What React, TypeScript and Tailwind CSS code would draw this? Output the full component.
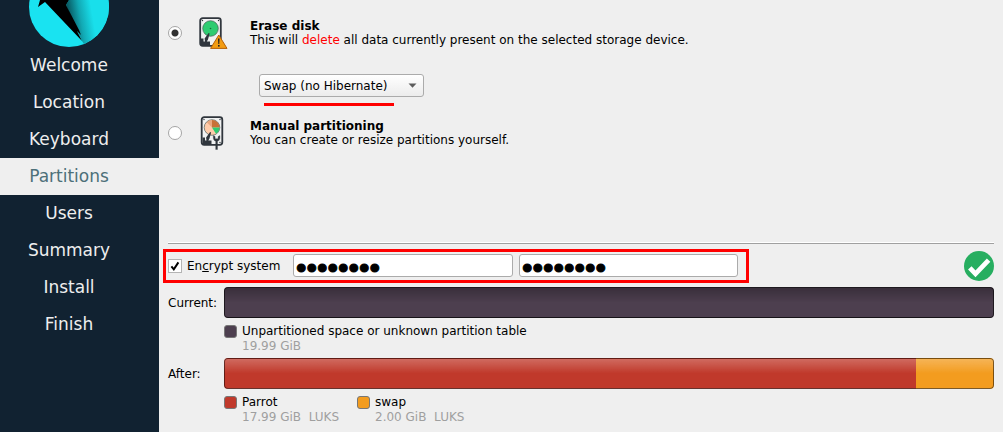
import { useState } from "react";

const steps = ["Welcome", "Location", "Keyboard", "Partitions", "Users", "Summary", "Install", "Finish"];

type Segment = { name: string; detail: string; share: number; fill: string };

const current: Segment[] = [
  { name: "Unpartitioned space or unknown partition table", detail: "19.99 GiB", share: 1, fill: "bg-[#4d3f4f]" },
];

const after: Segment[] = [
  { name: "Parrot", detail: "17.99 GiB\u00a0 LUKS", share: 0.899, fill: "bg-[#c0392b]" },
  { name: "swap", detail: "2.00 GiB\u00a0 LUKS", share: 0.101, fill: "bg-[#f39c1f]" },
];

function Logo() {
  return (
    <svg className="h-[47px] w-20" viewBox="0 0 80 47" aria-hidden="true">
      <defs>
        <linearGradient id="wing" gradientUnits="userSpaceOnUse" x1="38" y1="10" x2="62" y2="6">
          <stop offset="0" stopColor="#07525a" />
          <stop offset="0.5" stopColor="#12a9b4" />
          <stop offset="1" stopColor="#19dfeb" />
        </linearGradient>
        <clipPath id="disc">
          <circle cx="40" cy="7" r="40" />
        </clipPath>
      </defs>
      <g clipPath="url(#disc)">
        <rect width="80" height="47" fill="#19e3f1" />
        <path d="M40 0H80V47H57L53 41L37 5Z" fill="url(#wing)" />
        <path d="M11 0L9 7L16 2L53 41L48 31L52 35L50 30L37 5L40 0Z" fill="#000" />
      </g>
    </svg>
  );
}

function Disk({ platter }: { platter: string }) {
  return (
    <>
      <rect x="4.2" y="1.2" width="20.6" height="27.6" rx="2.5" fill="#f1f2f2" stroke="#30363d" strokeWidth="1.8" />
      <circle cx="14.5" cy="11.5" r="7.8" fill={platter} stroke="#4b5b58" strokeWidth="0.7" />
      <g fill="#30363d">
        <circle cx="6.5" cy="3.5" r="0.7" />
        <circle cx="22.5" cy="3.5" r="0.7" />
        <circle cx="22.5" cy="26.5" r="0.7" />
      </g>
    </>
  );
}

function Arm() {
  return <path d="M5 21.5H7.5V24.5H9L8.6 21.5L12.6 16L13.6 16.6L12 22.5L10.8 24.5H14V28H5Z" fill="#30363d" />;
}

function EraseIcon() {
  return (
    <svg className="size-8" viewBox="0 0 32 32" aria-hidden="true">
      <Disk platter="#2ecc71" />
      <circle cx="14.5" cy="11.5" r="0.8" fill="#176b3a" />
      <Arm />
      <path d="M22.8 18L31 31.4H14.6Z" fill="#f39c12" stroke="#b45f06" strokeWidth="1" strokeLinejoin="round" />
      <path d="M22 21.5h1.6l-.3 5.5h-1z" fill="#222" />
      <rect x="22" y="28" width="1.6" height="1.6" fill="#222" />
    </svg>
  );
}

function ManualIcon() {
  return (
    <svg className="h-[34px] w-8" viewBox="0 0 32 34" aria-hidden="true">
      <g transform="translate(1.5 0)">
        <Disk platter="#ffccaa" />
        <path d="M14.5 11.5V4A7.5 7.5 0 0 1 22 11.5Z" fill="#c87137" />
        <path d="M14.5 11.5L9.2 6.2A7.5 7.5 0 0 1 14.5 4Z" fill="#e9a982" />
        <path d="M14.5 11.5H22A7.5 7.5 0 0 1 18.5 17.8Z" fill="#2ecc71" />
        <Arm />
        <path
          d="M15.8 19.6V22.2Q16 24.5 18.2 25.2V33.6H20V25.2Q22.2 24.5 22.4 22.2V19.6L20.6 20.6V22.8H17.6V20.6Z"
          fill="#30363d"
          stroke="#30363d"
          strokeWidth="0.3"
        />
      </g>
    </svg>
  );
}

function Radio({ id, checked, onSelect }: { id: string; checked: boolean; onSelect: () => void }) {
  return (
    <input
      id={id}
      type="radio"
      name="mode"
      checked={checked}
      onChange={onSelect}
      className="size-[14px] shrink-0 appearance-none rounded-full border border-[#a5a5a5] bg-white checked:bg-[radial-gradient(circle,#333_0_3px,#fff_4px)]"
    />
  );
}

function Bar({ segments, dark = false }: { segments: Segment[]; dark?: boolean }) {
  return (
    <div className="relative flex h-[31px] overflow-hidden rounded">
      {segments.map((s) => (
        <div key={s.name} className={s.fill} style={{ flexGrow: s.share, flexBasis: 0 }} />
      ))}
      <div
        className={
          dark
            ? "absolute inset-0 rounded border border-black/60 bg-linear-to-b from-black/25 to-transparent to-50%"
            : "absolute inset-0 rounded border border-black/50 bg-linear-to-b from-white/25 to-transparent to-50%"
        }
      />
    </div>
  );
}

function Legend({ segments }: { segments: Segment[] }) {
  return (
    <ul className="flex gap-[18px] pt-[6px]">
      {segments.map((s) => (
        <li key={s.name} className="flex gap-[5px]">
          <span className={`mt-px size-[13px] shrink-0 rounded-[3px] border border-[#777] ${s.fill}`} />
          <span className="leading-[15px]">
            <span className="block">{s.name}</span>
            <span className="block text-[#9f9f9f]">{s.detail}</span>
          </span>
        </li>
      ))}
    </ul>
  );
}

export default function App() {
  const [mode, setMode] = useState("erase");
  const [encrypt, setEncrypt] = useState(true);
  const field =
    "h-[23px] rounded-[3px] border border-[#ababab] bg-white px-[2px] pt-1 font-['Liberation_Sans',sans-serif] text-[30px] leading-[17px] text-black outline-none [-webkit-text-stroke:1px_black]";

  return (
    <div className="flex min-h-screen bg-[#efefef] font-['DejaVu_Sans',sans-serif] text-[12px] leading-[14px] text-black">
      <aside className="w-[159px] shrink-0 bg-[#112231]">
        <div className="flex justify-center pr-[21px]">
          <Logo />
        </div>
        <nav>
          {steps.map((step) => (
            <a
              key={step}
              href={`#${step.toLowerCase()}`}
              aria-current={step === "Partitions" ? "step" : undefined}
              className="block h-[37px] pr-[21px] text-center text-[17px] leading-9 text-[#eeeeee] aria-[current=step]:bg-[#efefef] aria-[current=step]:text-[#4d7079]"
            >
              {step}
            </a>
          ))}
        </nav>
      </aside>

      <main className="flex min-w-0 flex-1 flex-col px-[9px] pt-[17px]">
        <div className="flex items-center">
          <Radio id="erase" checked={mode === "erase"} onSelect={() => setMode("erase")} />
          <label htmlFor="erase" className="flex items-center gap-[22px] pl-[14px]">
            <EraseIcon />
            <span>
              <b className="block">Erase disk</b>
              This will <span className="text-[#ff0000]">delete</span> all data currently present on the selected storage device.
            </span>
          </label>
        </div>

        <div className="relative mt-[25px] ml-[91px] w-[165px]">
          <select
            aria-label="Swap"
            className="block h-[23px] w-full appearance-none rounded-[3px] border border-[#ababab] bg-linear-to-b from-white to-[#ececec] px-1"
          >
            <option>Swap (no Hibernate)</option>
            <option>Swap (with Hibernate)</option>
            <option>No Swap</option>
          </select>
          <svg className="pointer-events-none absolute top-[9px] right-[7px] h-[5px] w-[9px]" viewBox="0 0 9 5" aria-hidden="true">
            <path d="M0.5 0.5H8.5L4.5 4.8Z" fill="#5c5c5c" />
          </svg>
          <div className="absolute top-[29px] left-[5px] h-[3px] w-[130px] bg-[#ff0000]" />
        </div>

        <div className="mt-[19px] flex items-center">
          <Radio id="manual" checked={mode === "manual"} onSelect={() => setMode("manual")} />
          <label htmlFor="manual" className="flex items-center gap-[22px] pl-[14px]">
            <ManualIcon />
            <span>
              <b className="block">Manual partitioning</b>
              You can create or resize partitions yourself.
            </span>
          </label>
        </div>

        <hr className="mt-[92px] h-[2px] border-t border-b border-t-white border-b-[#a0a0a0]" />

        <div className="mt-[7px] flex items-start justify-between">
          <div className="relative mt-[3px] flex items-center">
            <span className="grid size-[14px]">
              <input
                id="encrypt"
                type="checkbox"
                checked={encrypt}
                onChange={() => setEncrypt(!encrypt)}
                className="peer col-start-1 row-start-1 size-[14px] appearance-none border border-[#b4b4b4] bg-white"
              />
              <svg
                className="pointer-events-none invisible col-start-1 row-start-1 size-[14px] peer-checked:visible"
                viewBox="0 0 14 14"
                aria-hidden="true"
              >
                <path d="M3.4 7.4L5.8 10.3L10.4 3.4" fill="none" stroke="#000" strokeWidth="2" />
              </svg>
            </span>
            <label htmlFor="encrypt" className="w-[111px] pl-[5px]">
              En<u>c</u>rypt system
            </label>
            <input type="password" aria-label="Passphrase" defaultValue="password" className={`${field} w-[220px]`} />
            <input type="password" aria-label="Confirm passphrase" defaultValue="password" className={`${field} ml-[6px] w-[219px]`} />
            <div className="pointer-events-none absolute -top-[5px] -right-[11px] -bottom-[6px] -left-[5px] border-[3px] border-[#ff0000]" />
          </div>
          <svg className="size-[30px] shrink-0" viewBox="0 0 30 30" role="img" aria-label="Passphrases match">
            <circle cx="15" cy="15" r="15" fill="#27ae60" />
            <path d="M5.8 16.8L11.5 22.8L24.6 9.2" fill="none" stroke="#fff" strokeWidth="4.8" />
          </svg>
        </div>

        <div className="mt-[6px] grid grid-cols-[56px_1fr]">
          <span className="h-[31px] leading-8">Current:</span>
          <Bar segments={current} dark />
          <div className="col-start-2">
            <Legend segments={current} />
          </div>
        </div>
        <div className="mt-1 grid grid-cols-[56px_1fr]">
          <span className="h-[31px] leading-8">After:</span>
          <Bar segments={after} />
          <div className="col-start-2">
            <Legend segments={after} />
          </div>
        </div>
      </main>
    </div>
  );
}
